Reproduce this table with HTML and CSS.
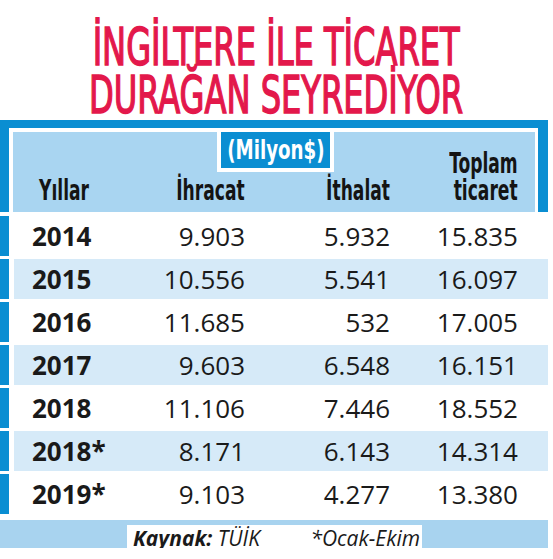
FILE: index.html
```html
<!DOCTYPE html>
<html lang="tr">
<head>
<meta charset="utf-8">
<link rel="stylesheet" href="styles.css">
</head>
<body>
<div class="page">
  <h1 class="title">
    <span class="tline">İNGİLTERE İLE TİCARET</span>
    <span class="tline">DURAĞAN SEYREDİYOR</span>
  </h1>
  <div class="table">
    <div class="head">
      <div class="head-inner">
        <div class="badge"><span class="sq">(Milyon$)</span></div>
        <div class="hc hl"><span class="sq">Yıllar</span></div>
        <div class="hc hr"><span class="sq">İhracat</span></div>
        <div class="hc hr"><span class="sq">İthalat</span></div>
        <div class="hc hr"><span class="sq">Toplam<br>ticaret</span></div>
      </div>
    </div>
    <div class="rows">
      <div class="row"><div class="bar"></div><div class="cells"><span class="year">2014</span><span class="num">9.903</span><span class="num">5.932</span><span class="num">15.835</span></div></div>
      <div class="row alt"><div class="bar"></div><div class="cells"><span class="year">2015</span><span class="num">10.556</span><span class="num">5.541</span><span class="num">16.097</span></div></div>
      <div class="row"><div class="bar"></div><div class="cells"><span class="year">2016</span><span class="num">11.685</span><span class="num">532</span><span class="num">17.005</span></div></div>
      <div class="row alt"><div class="bar"></div><div class="cells"><span class="year">2017</span><span class="num">9.603</span><span class="num">6.548</span><span class="num">16.151</span></div></div>
      <div class="row"><div class="bar"></div><div class="cells"><span class="year">2018</span><span class="num">11.106</span><span class="num">7.446</span><span class="num">18.552</span></div></div>
      <div class="row alt"><div class="bar"></div><div class="cells"><span class="year">2018*</span><span class="num">8.171</span><span class="num">6.143</span><span class="num">14.314</span></div></div>
      <div class="row"><div class="bar"></div><div class="cells"><span class="year">2019*</span><span class="num">9.103</span><span class="num">4.277</span><span class="num">13.380</span></div></div>
    </div>
    <div class="foot">
      <div class="src"><span><b>Kaynak:</b> TÜİK</span><span>*Ocak-Ekim</span></div>
    </div>
  </div>
</div>
</body>
</html>
```

FILE: styles.css
```css
body {
  margin: 0;
  background: #fff;
}

.page {
  width: 553px;
}

.title {
  margin: 0;
  box-sizing: border-box;
  height: 120px;
  padding-top: 24px;
  display: flex;
  flex-direction: column;
  align-items: center;
  font-family: "DejaVu Sans Condensed", "DejaVu Sans", sans-serif;
  font-weight: normal;
  font-size: 51px;
  line-height: 48px;
  color: #e3184b;
  -webkit-text-stroke: 1.5px #e3184b;
}

.tline {
  display: block;
  white-space: nowrap;
  transform: scaleX(0.70);
}

.table {
  width: 548px;
}

.head {
  box-sizing: border-box;
  height: 92px;
  border-style: solid;
  border-color: #0a8ed2;
  border-width: 8px 10px 0 9px;
  padding: 4px 3px 0 4px;
}

.head-inner {
  position: relative;
  box-sizing: border-box;
  height: 80px;
  background: #a9d5f1;
  display: grid;
  grid-template-columns: 101px 105px 145px 128px;
  align-items: end;
  padding: 0 17px 8px 26px;
  font-family: "DejaVu Sans Condensed", "DejaVu Sans", sans-serif;
  font-weight: bold;
  font-size: 28px;
  line-height: 27px;
  color: #141414;
}

.sq {
  display: inline-block;
  white-space: nowrap;
  transform: scaleX(0.68);
}

.hl {
  text-align: left;
}

.hl .sq {
  transform-origin: left center;
}

.hr {
  text-align: right;
}

.hr .sq {
  transform-origin: right center;
}

.badge {
  position: absolute;
  left: 204px;
  top: 0;
  width: 109px;
  height: 36px;
  box-sizing: content-box;
  background: #0a8ed2;
  border: 4px solid #fff;
  border-top: 0;
  display: flex;
  align-items: center;
  justify-content: center;
  color: #fff;
  font-size: 27px;
  line-height: 30px;
}

.badge .sq {
  transform: scaleX(0.75);
  transform-origin: center;
}

.rows {
  margin-top: 4px;
  display: flex;
  flex-direction: column;
  gap: 3px;
}

.row {
  display: flex;
  height: 40px;
}

.bar {
  flex: none;
  width: 9px;
  margin-right: 5px;
  background: #0a8ed2;
}

.cells {
  flex: 1;
  display: grid;
  grid-template-columns: 108px 105px 145px 128px;
  align-items: center;
  padding: 0 30px 0 18px;
  font-family: "Open Sans", sans-serif;
  font-size: 26px;
  line-height: 40px;
  color: #1a1a1a;
}

.row.alt .cells {
  background: #d6eaf8;
}

.year {
  font-weight: bold;
}

.num {
  text-align: right;
}

.foot {
  box-sizing: border-box;
  margin-top: 6px;
  height: 28px;
  padding: 5px 0 0 127px;
  background: #a8d3ef;
}

.src {
  box-sizing: border-box;
  width: 295px;
  height: 23px;
  padding: 2px 2px 0 6px;
  background: #fff;
  display: flex;
  justify-content: space-between;
  font-family: "Open Sans", sans-serif;
  font-style: italic;
  font-size: 21px;
  line-height: 23px;
  color: #1a1a1a;
}

.src b {
  font-weight: bold;
}
```
